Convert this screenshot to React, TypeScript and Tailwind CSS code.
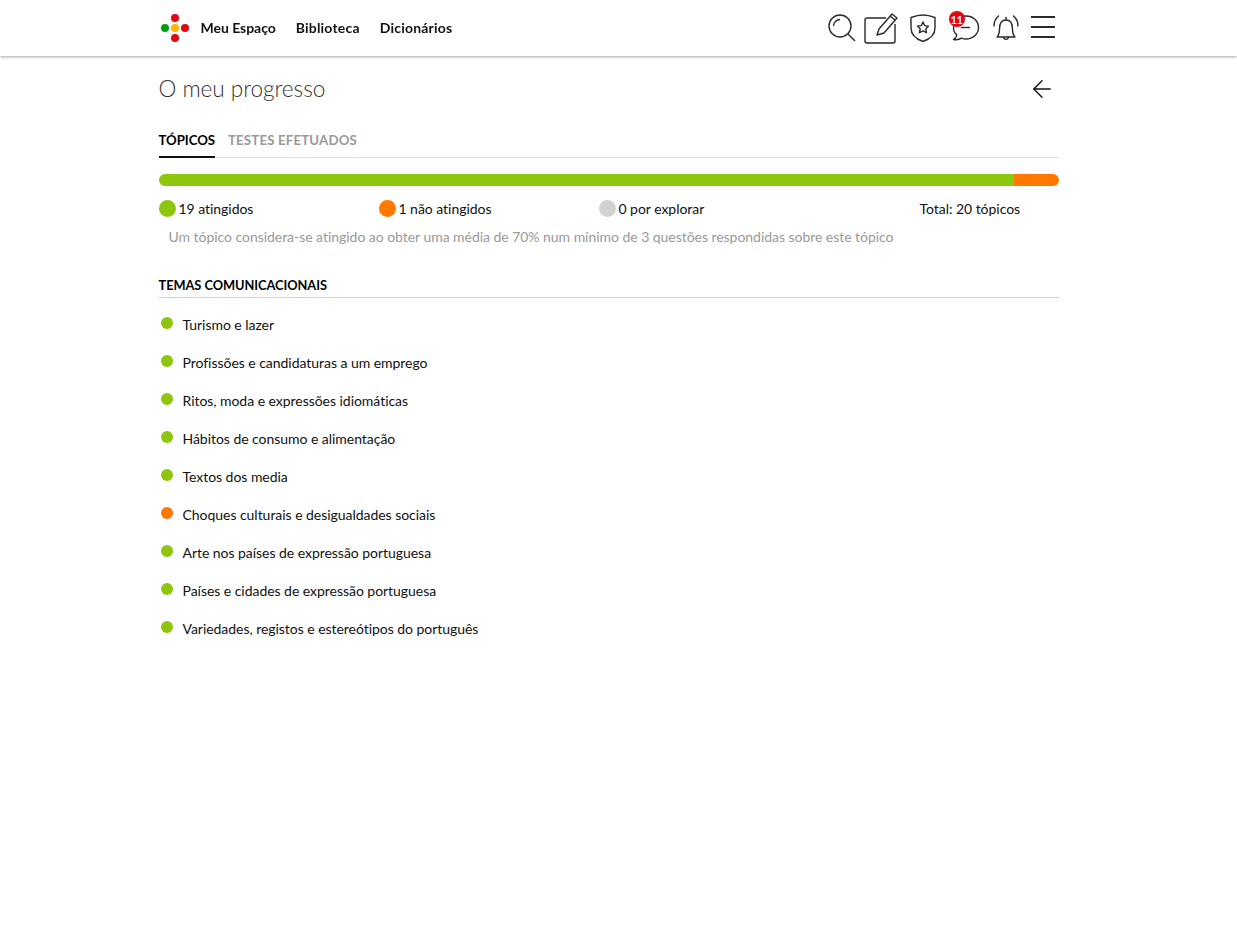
import React from 'react';
import { ArrowLeft } from 'lucide-react';

const GREEN = 'bg-[#8cc60d]';
const ORANGE = 'bg-[#ff7900]';

const topics = [
  { label: 'Turismo e lazer', color: GREEN },
  { label: 'Profissões e candidaturas a um emprego', color: GREEN },
  { label: 'Ritos, moda e expressões idiomáticas', color: GREEN },
  { label: 'Hábitos de consumo e alimentação', color: GREEN },
  { label: 'Textos dos media', color: GREEN },
  { label: 'Choques culturais e desigualdades sociais', color: ORANGE },
  { label: 'Arte nos países de expressão portuguesa', color: GREEN },
  { label: 'Países e cidades de expressão portuguesa', color: GREEN },
  { label: 'Variedades, registos e estereótipos do português', color: GREEN },
];

const Logo = () => (
  <svg width="30" height="30" viewBox="0 0 30 30" className="block">
    <circle cx="15" cy="5" r="4" fill="#e30613" />
    <circle cx="15" cy="25" r="4" fill="#e30613" />
    <circle cx="25" cy="15" r="4" fill="#e30613" />
    <circle cx="5" cy="15" r="4" fill="#009e0f" />
    <circle cx="15" cy="15" r="4" fill="#ffb400" />
  </svg>
);

// Icons of the top bar, traced from the reference
const HeaderIcons = () => (
  <div className="flex items-center text-[#2a2a2a]">
    <svg width="28" height="28" viewBox="0 0 28 28" fill="none" stroke="currentColor" strokeWidth="1.4">
      <circle cx="12" cy="12" r="11" />
      <path d="M5.500 12c0-3.500 2.800-6.500 6.500-6.500" />
      <path d="M20 20l7 7" />
    </svg>
    <svg width="34" height="32" viewBox="0 0 34 32" fill="none" stroke="currentColor" strokeWidth="1.4" strokeLinejoin="round" className="ml-[8px]">
      <path d="M22 6H3a2 2 0 0 0-2 2v21a2 2 0 0 0 2 2h26a2 2 0 0 0 2-2V12" />
      <path d="M13 23l2-6L28 2l5 4-13 15z" />
      <path d="M26 4l5 4" />
    </svg>
    <svg width="28" height="30" viewBox="0 0 28 30" fill="none" stroke="currentColor" strokeWidth="1.4" strokeLinejoin="round" className="ml-[11px]">
      <path d="M14 2c4 0 8 1 12 2.500V15c0 6-5 11-12 13.500C7 26 2 21 2 15V4.500C6 3 10 2 14 2z" />
      <path d="M14 9l1.700 3.600 3.900.5-2.800 2.700.7 3.900-3.500-1.900-3.500 1.900.7-3.900-2.800-2.700 3.900-.5z" />
    </svg>
    <div className="relative ml-[13px] h-[30px] w-[30px]">
      <svg width="30" height="30" viewBox="0 0 30 30" fill="none" stroke="currentColor" strokeWidth="1.4" strokeLinejoin="round">
        <path d="M16 3c7 0 12.500 5 12.500 11.500S23 26 16 26c-2 0-3-.3-4.500-.9C9.500 26.500 7 27 3.500 26.500 5.500 25.500 6.500 24 6.800 22 4.500 20 3.500 17.500 3.500 14.500 3.500 8 9 3 16 3z" />
        <path d="M11 14.500h9" />
      </svg>
      <span className="absolute left-[-1px] top-[-2px] flex h-[16px] w-[16px] items-center justify-center rounded-full bg-[#e30613] text-[11px] font-bold leading-none tracking-[-0.5px] text-white">
        11
      </span>
    </div>
    <svg width="28" height="30" viewBox="0 0 28 30" fill="none" stroke="currentColor" strokeWidth="1.4" strokeLinecap="round" strokeLinejoin="round" className="ml-[12px]">
      <path d="M5 24c2-2 2.500-4 2.500-8 0-5 2-9 6.500-9s6.500 4 6.500 9c0 4 .5 6 2.500 8z" />
      <path d="M11.500 24.500a2.600 2.600 0 0 0 5 0" />
      <path d="M14 4.500V7" />
      <path d="M6.500 3C3.500 5.500 2 9 2 13" />
      <path d="M21.500 3c3 2.500 4.500 6 4.500 10" />
    </svg>
    <div className="ml-[11px] flex w-[24px] -translate-y-[1px] flex-col gap-[8px]">
      <div className="h-[2px] bg-[#2a2a2a]" />
      <div className="h-[2px] bg-[#2a2a2a]" />
      <div className="h-[2px] bg-[#2a2a2a]" />
    </div>
  </div>
);

const LegendItem = ({ color, label, width }: { color: string; label: string; width: string }) => (
  <div className={`flex items-center gap-[3px] ${width}`}>
    <span className={`h-[17px] w-[17px] rounded-full ${color}`} />
    <span>{label}</span>
  </div>
);

export default function App() {
  return (
    <div className="min-h-[937px] bg-white pr-[20px] font-['Lato','Noto_Sans',sans-serif] text-[14px] tracking-[-0.04px] text-[#111] [font-variant-ligatures:none]">
      <header className="fixed inset-x-0 top-0 h-[56px] bg-white shadow-[0_1px_3px_rgba(0,0,0,0.35)]">
        <div className="flex h-full w-[1217px] justify-center">
          <div className="flex w-[900px] items-center justify-between pl-[1px] pr-[4px]">
            <div className="flex items-center">
              <Logo />
              <nav className="ml-[11px] flex -translate-y-[1px] gap-[20px] text-[14px] font-bold text-[#111]">
                <span>Meu Espaço</span>
                <span className="tracking-[0.2px]">Biblioteca</span>
                <span className="tracking-[0.2px]">Dicionários</span>
              </nav>
            </div>
            <HeaderIcons />
          </div>
        </div>
      </header>

      <main className="mx-auto w-[900px] pt-[56px]">
        <div className="flex items-center justify-between pt-[19px]">
          <h1 className="text-[22.6px] font-light leading-[28px] text-[#333]">O meu progresso</h1>
          <ArrowLeft size={28} strokeWidth={1.2} className="mr-[3px] text-[#111]" />
        </div>

        <div className="mt-[21px] flex h-[34px] gap-[13px] border-b border-[#e0e0e0] text-[13.2px] font-bold">
          <div className="h-[34px] border-b-2 border-[#111] pt-[7px] text-black">TÓPICOS</div>
          <div className="pt-[7px] tracking-[0.2px] text-[#999]">TESTES EFETUADOS</div>
        </div>

        <div className="mt-[16px] flex h-[12px] overflow-hidden rounded-full">
          <div className={`w-[95%] ${GREEN}`} />
          <div className={`w-[5%] ${ORANGE}`} />
        </div>

        <div className="mt-[12px] flex h-[20px] items-center">
          <LegendItem color={GREEN} label="19 atingidos" width="w-[220px]" />
          <LegendItem color={ORANGE} label="1 não atingidos" width="w-[220px]" />
          <LegendItem color="bg-[#d2d2d2]" label="0 por explorar" width="w-[321px]" />
          <span>Total: 20 tópicos</span>
        </div>
        <p className="mt-[8px] pl-[10px] text-[#999]">
          Um tópico considera-se atingido ao obter uma média de 70% num mínimo de 3 questões respondidas sobre este tópico
        </p>

        <h2 className="mt-[28px] h-[23px] border-b border-[#d0d0d0] text-[12.8px] font-bold uppercase leading-[20px] text-black">
          Temas comunicacionais
        </h2>
        <ul className="mt-[8px] flex flex-col">
          {topics.map((topic) => (
            <li key={topic.label} className="flex h-[38px] items-start">
              <span className={`ml-[2px] mt-[11px] h-[12px] w-[12px] rounded-full ${topic.color}`} />
              <span className="ml-[10px] mt-[9px] leading-[20px]">{topic.label}</span>
            </li>
          ))}
        </ul>
      </main>
    </div>
  );
}
